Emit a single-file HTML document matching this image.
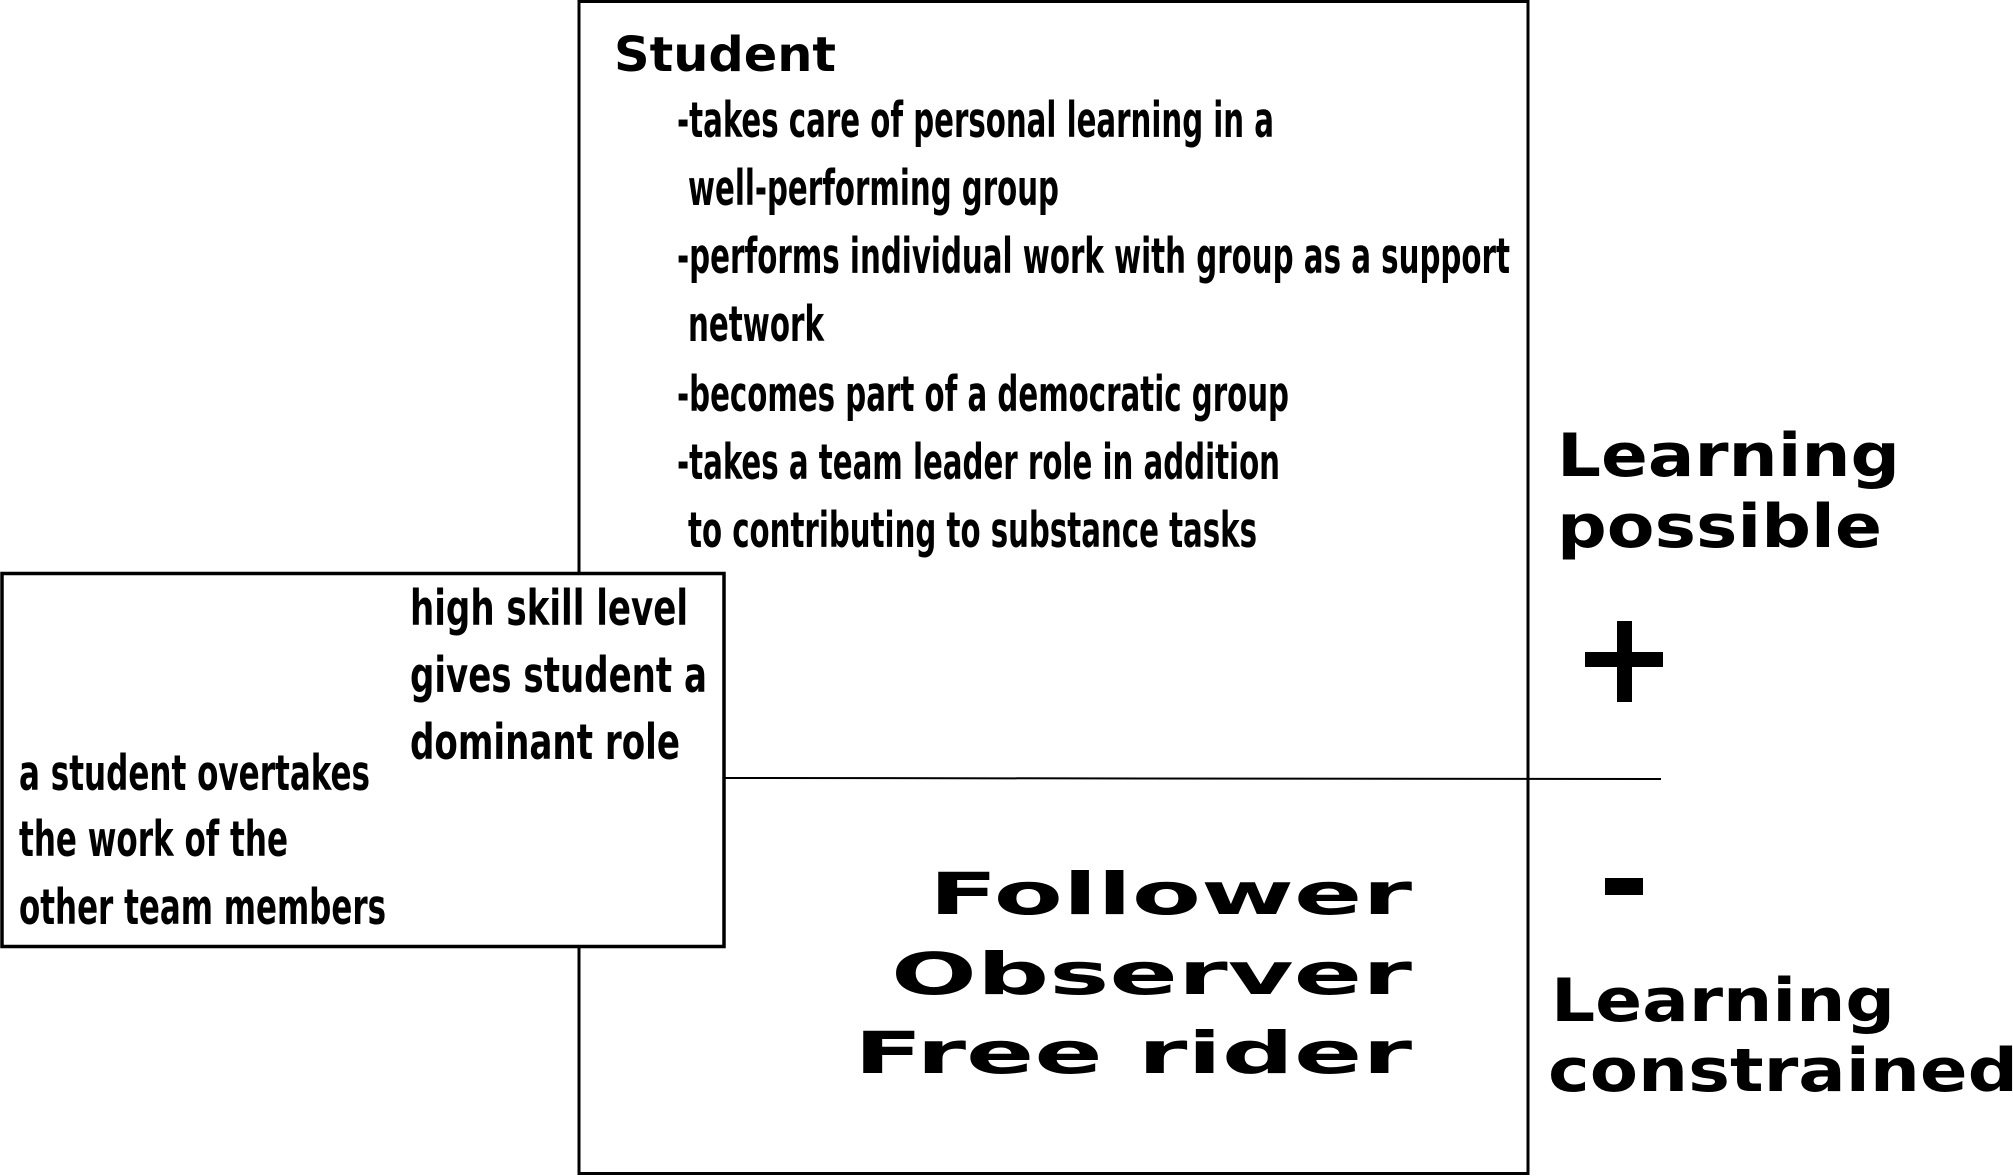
<!DOCTYPE html>
<html><head><meta charset="utf-8"><style>
html,body{margin:0;padding:0;background:#fff;}
svg{display:block;}
text{fill:#000;}
.c{font-family:"DejaVu Sans Condensed","DejaVu Sans","Liberation Sans",sans-serif;font-weight:bold;font-size:49px;}
.w{font-family:"DejaVu Sans","Liberation Sans",sans-serif;font-weight:bold;}
</style></head><body>
<svg width="2013" height="1176" viewBox="0 0 2013 1176" xmlns="http://www.w3.org/2000/svg">
<rect x="0" y="0" width="2013" height="1176" fill="#fff"/>
<rect x="579" y="1.5" width="949" height="1172" fill="none" stroke="#000" stroke-width="3"/>
<line x1="724" y1="778" x2="1661" y2="779" stroke="#000" stroke-width="2"/>
<rect x="2" y="573.5" width="722" height="373" fill="#fff" stroke="#000" stroke-width="3.5"/>

<text class="w" x="614" y="71" font-size="48" textLength="222" lengthAdjust="spacingAndGlyphs">Student</text>
<text class="c" x="677" y="137" textLength="597" lengthAdjust="spacingAndGlyphs">-takes care of personal learning in a</text>
<text class="c" x="688" y="205" textLength="371" lengthAdjust="spacingAndGlyphs">well-performing group</text>
<text class="c" x="677" y="273" textLength="833" lengthAdjust="spacingAndGlyphs">-performs individual work with group as a support</text>
<text class="c" x="688" y="341" textLength="136" lengthAdjust="spacingAndGlyphs">network</text>
<text class="c" x="677" y="411" textLength="612" lengthAdjust="spacingAndGlyphs">-becomes part of a democratic group</text>
<text class="c" x="677" y="479" textLength="603" lengthAdjust="spacingAndGlyphs">-takes a team leader role in addition</text>
<text class="c" x="688" y="547" textLength="569" lengthAdjust="spacingAndGlyphs">to contributing to substance tasks</text>

<text class="c" x="410" y="625" textLength="278" lengthAdjust="spacingAndGlyphs">high skill level</text>
<text class="c" x="410" y="692" textLength="297" lengthAdjust="spacingAndGlyphs">gives student a</text>
<text class="c" x="410" y="759" textLength="270" lengthAdjust="spacingAndGlyphs">dominant role</text>
<text class="c" x="19" y="790" textLength="351" lengthAdjust="spacingAndGlyphs">a student overtakes</text>
<text class="c" x="19" y="856" textLength="269" lengthAdjust="spacingAndGlyphs">the work of the</text>
<text class="c" x="19" y="924" textLength="367" lengthAdjust="spacingAndGlyphs">other team members</text>

<text class="w" x="929" y="914" font-size="58" textLength="483" lengthAdjust="spacingAndGlyphs">Follower</text>
<text class="w" x="891" y="994" font-size="58" textLength="521" lengthAdjust="spacingAndGlyphs">Observer</text>
<text class="w" x="854" y="1073" font-size="58" textLength="558" lengthAdjust="spacingAndGlyphs">Free rider</text>

<text class="w" x="1557" y="476" font-size="60" textLength="343" lengthAdjust="spacingAndGlyphs">Learning</text>
<text class="w" x="1557" y="547" font-size="60" textLength="325" lengthAdjust="spacingAndGlyphs">possible</text>
<rect x="1585" y="652" width="78" height="15" fill="#000"/>
<rect x="1617" y="621" width="15" height="81" fill="#000"/>
<rect x="1605" y="878" width="38" height="17" fill="#000"/>
<text class="w" x="1551" y="1021" font-size="60" textLength="344" lengthAdjust="spacingAndGlyphs">Learning</text>
<text class="w" x="1548" y="1091" font-size="60" textLength="470" lengthAdjust="spacingAndGlyphs">constrained</text>
</svg>
</body></html>
